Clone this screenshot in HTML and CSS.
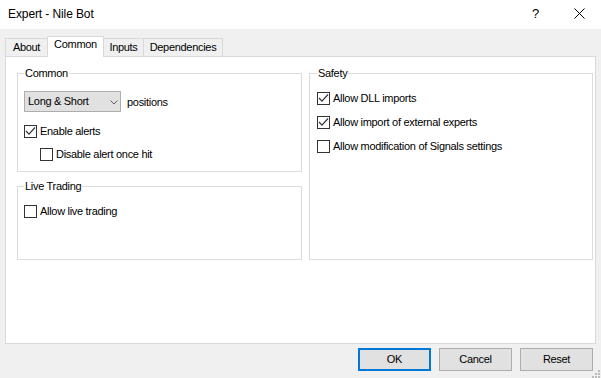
FILE: index.html
```html
<!DOCTYPE html>
<html>
<head>
<meta charset="utf-8">
<link rel="stylesheet" href="styles.css">
</head>
<body>
<div class="window">
  <div class="titlebar">
    <span class="title">Expert - Nile Bot</span>
    <span class="help">?</span>
    <svg class="close" width="11" height="11" viewBox="0 0 11 11"><path d="M0.5 0.5 L10.5 10.5 M10.5 0.5 L0.5 10.5" stroke="#000" stroke-width="1" fill="none"/></svg>
  </div>
  <div class="tabs">
    <div class="tab tab-about">About</div>
    <div class="tab tab-common tab-active">Common</div>
    <div class="tab tab-inputs">Inputs</div>
    <div class="tab tab-deps">Dependencies</div>
  </div>
  <div class="panel">
    <div class="columns">
      <div class="col">
        <div class="group group-common">
          <div class="group-title">Common</div>
          <div class="combo-row">
            <div class="combo">
              <span class="combo-text">Long &amp; Short</span>
              <svg class="chevron" width="8" height="5" viewBox="0 0 8 5"><path d="M0.5 0.5 L4 4 L7.5 0.5" stroke="#606060" stroke-width="1" fill="none"/></svg>
            </div>
            <span class="combo-label">positions</span>
          </div>
          <div class="check-row row-enable">
            <span class="box"><svg width="11" height="11" viewBox="0 0 11 11"><path d="M1 5 L4 8.2 L10 1.5" stroke="#333" stroke-width="1.2" fill="none"/></svg></span>
            <span>Enable alerts</span>
          </div>
          <div class="check-row row-disable">
            <span class="box"></span>
            <span>Disable alert once hit</span>
          </div>
        </div>
        <div class="group group-live">
          <div class="group-title">Live Trading</div>
          <div class="check-row row-live">
            <span class="box"></span>
            <span>Allow live trading</span>
          </div>
        </div>
      </div>
      <div class="group group-safety">
        <div class="group-title">Safety</div>
        <div class="check-row row-first">
          <span class="box"><svg width="11" height="11" viewBox="0 0 11 11"><path d="M1 5 L4 8.2 L10 1.5" stroke="#333" stroke-width="1.2" fill="none"/></svg></span>
          <span>Allow DLL imports</span>
        </div>
        <div class="check-row row-next">
          <span class="box"><svg width="11" height="11" viewBox="0 0 11 11"><path d="M1 5 L4 8.2 L10 1.5" stroke="#333" stroke-width="1.2" fill="none"/></svg></span>
          <span>Allow import of external experts</span>
        </div>
        <div class="check-row row-next">
          <span class="box"></span>
          <span>Allow modification of Signals settings</span>
        </div>
      </div>
    </div>
  </div>
  <div class="buttons">
    <div class="btn btn-default">OK</div>
    <div class="btn">Cancel</div>
    <div class="btn">Reset</div>
  </div>
  <svg class="grip" width="8" height="8" viewBox="0 0 8 8">
    <rect x="6" y="0" width="2" height="2" fill="#bdbdbd"/>
    <rect x="3" y="3" width="2" height="2" fill="#bdbdbd"/>
    <rect x="6" y="3" width="2" height="2" fill="#bdbdbd"/>
    <rect x="0" y="6" width="2" height="2" fill="#bdbdbd"/>
    <rect x="3" y="6" width="2" height="2" fill="#bdbdbd"/>
    <rect x="6" y="6" width="2" height="2" fill="#bdbdbd"/>
  </svg>
</div>
</body>
</html>
```
FILE: styles.css
```css
html, body {
  margin: 0;
  padding: 0;
}
body {
  background: #f0f0f0;
  font-family: "Liberation Sans", Arial, sans-serif;
  font-size: 11px;
  color: #000;
  letter-spacing: -0.3px;
}
.window {
  position: relative;
  width: 601px;
  height: 378px;
  overflow: hidden;
}
.titlebar {
  display: flex;
  align-items: flex-start;
  height: 29px;
  background: #fff;
}
.title {
  flex: 1;
  font-size: 12px;
  line-height: 14px;
  padding: 7px 0 0 8px;
  letter-spacing: -0.1px;
}
.help {
  font-size: 13px;
  line-height: 15px;
  padding-top: 6px;
  width: 8px;
  margin-right: 34px;
  letter-spacing: 0;
}
.close {
  margin-top: 8px;
  margin-right: 16px;
}
.tabs {
  display: flex;
  align-items: flex-end;
  height: 20px;
  margin: 7px 0 0 5px;
}
.tab {
  box-sizing: border-box;
  height: 18px;
  border: 1px solid #d9d9d9;
  border-bottom: 0;
  padding-top: 2px;
  line-height: 13px;
  text-align: center;
  margin-right: -1px;
  background: #f0f0f0;
}
.tab-active {
  height: 21px;
  padding-top: 1px;
  margin-bottom: -1px;
  background: #fff;
  position: relative;
  z-index: 1;
}
.tab-about { width: 43px; }
.tab-common { width: 57px; }
.tab-inputs { width: 41px; }
.tab-deps { width: 80px; }
.panel {
  box-sizing: border-box;
  width: 591px;
  height: 288px;
  margin-left: 5px;
  background: #fff;
  border: 1px solid #d9d9d9;
  padding: 16px 0 0 11px;
}
.columns {
  display: grid;
  grid-template-columns: 285px 284px;
  column-gap: 7px;
  align-items: stretch;
}
.col {
  display: flex;
  flex-direction: column;
  gap: 14px;
}
.group {
  border: 1px solid #dcdcdc;
  padding: 0 6px;
}
.group-title {
  display: block;
  width: max-content;
  line-height: 13px;
  margin: -7px 0 0 0;
  padding: 0 1px;
  background: #fff;
}
.group-common {
  padding-bottom: 10px;
}
.group-live {
  padding-bottom: 41px;
}
.group-safety {
  padding-left: 7px;
}
.combo-row {
  display: flex;
  align-items: center;
  margin-top: 11px;
}
.combo {
  box-sizing: border-box;
  display: flex;
  align-items: center;
  width: 97px;
  height: 21px;
  border: 1px solid #adadad;
  background: #e1e1e1;
  padding-left: 3px;
  line-height: 19px;
}
.combo-text {
  flex: 1;
}
.chevron {
  margin: 2px 2px 0 0;
}
.combo-label {
  margin-left: 6px;
}
.check-row {
  display: flex;
  align-items: flex-start;
  line-height: 13px;
}
.box {
  box-sizing: border-box;
  display: block;
  width: 13px;
  height: 13px;
  border: 1px solid #333;
  background: #fff;
  margin-right: 3px;
  flex: none;
}
.box svg {
  display: block;
}
.row-enable { margin-top: 13px; }
.row-disable { margin-top: 10px; margin-left: 16px; }
.row-live { margin-top: 12px; }
.row-first { margin-top: 12px; }
.row-next { margin-top: 11px; }
.buttons {
  display: flex;
  justify-content: flex-end;
  gap: 8px;
  margin-top: 4px;
  padding-right: 8px;
}
.btn {
  box-sizing: border-box;
  width: 73px;
  height: 23px;
  border: 1px solid #adadad;
  background: #e1e1e1;
  text-align: center;
  line-height: 21px;
}
.btn-default {
  border: 2px solid #0078d7;
  line-height: 19px;
}
.grip {
  position: absolute;
  right: 1px;
  bottom: 0;
}
```
